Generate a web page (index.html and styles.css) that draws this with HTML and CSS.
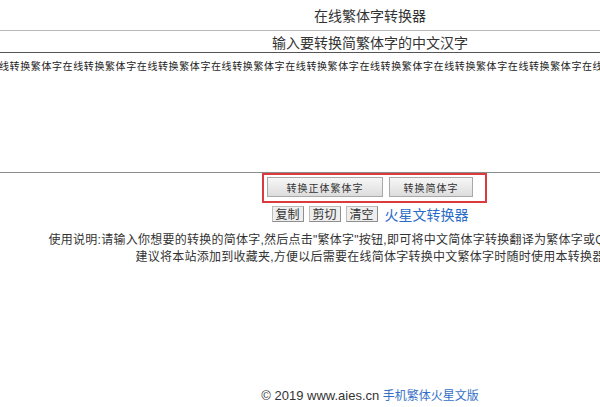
FILE: index.html
```html
<!DOCTYPE html>
<html lang="zh-CN">
<head>
<meta charset="utf-8">
<title>在线繁体字转换器</title>
<link rel="stylesheet" href="styles.css">
</head>
<body>
<div class="page">
  <h1 class="title">在线繁体字转换器</h1>
  <div class="subbar">输入要转换简繁体字的中文汉字</div>
  <textarea class="input" wrap="off" spellcheck="false">在线转换繁体字在线转换繁体字在线转换繁体字在线转换繁体字在线转换繁体字在线转换繁体字在线转换繁体字在线转换繁体字在线转换繁体字在线转换繁体字在线转换繁体字在线转换繁体字在线转换繁体字在线转换繁体字</textarea>
  <div class="actions">
    <div class="highlight">
      <button class="btn btn-wide">转换正体繁体字</button>
      <button class="btn btn-narrow">转换简体字</button>
    </div>
  </div>
  <div class="tools">
    <button class="btn-small">复制</button>
    <button class="btn-small">剪切</button>
    <button class="btn-small">清空</button>
    <a class="tool-link" href="#">火星文转换器</a>
  </div>
  <p class="note">使用说明:请输入你想要的转换的简体字,然后点击"繁体字"按钮,即可将中文简体字转换翻译为繁体字或QQ火星文,很方便<br>建议将本站添加到收藏夹,方便以后需要在线简体字转换中文繁体字时随时使用本转换器</p>
  <footer class="footer"><span class="footer-copy">© 2019 www.aies.cn</span> <a class="footer-link" href="#">手机繁体火星文版</a></footer>
</div>
</body>
</html>
```

FILE: styles.css
```css
html, body {
  margin: 0;
  padding: 0;
}

body {
  width: 600px;
  height: 407px;
  overflow: hidden;
  background: #fff;
  color: #333;
  font-family: "Liberation Sans", "Noto Sans CJK SC", sans-serif;
}

.page {
  width: 1066px;
  margin-left: -163px;
  height: 407px;
  display: flex;
  flex-direction: column;
}

.title {
  margin: 0;
  padding-top: 2px;
  height: 28px;
  line-height: 28px;
  font-size: 14px;
  font-weight: normal;
  text-align: center;
  color: #333;
  border-bottom: 1px solid #b8b8b8;
}

.subbar {
  padding-top: 4px;
  height: 17px;
  line-height: 17px;
  font-size: 14px;
  text-align: center;
  color: #333;
}

.input {
  display: block;
  box-sizing: border-box;
  width: 100%;
  height: 121px;
  margin: 0;
  padding: 6px 2px 2px 2px;
  border: 1px solid #777;
  border-top-color: #555;
  border-bottom-color: #8c8c8c;
  resize: none;
  overflow: hidden;
  outline: none;
  font-family: "Noto Sans CJK SC", sans-serif;
  font-size: 10px;
  letter-spacing: 0.6px;
  line-height: 14px;
  color: #222;
  background: #fff;
}

.actions {
  display: flex;
  justify-content: center;
}

.highlight {
  display: flex;
  gap: 6px;
  margin-left: 9px;
  padding: 2px 12px 4px 3px;
  border: 2px solid #db3b40;
}

.btn {
  height: 20px;
  margin: 0;
  padding: 0;
  border: 1px solid #a9a9a9;
  background: linear-gradient(#f7f7f7, #dcdcdc);
  font-family: "Noto Sans CJK SC", sans-serif;
  font-size: 10px;
  letter-spacing: 1px;
  color: #333;
}

.btn-wide {
  width: 116px;
}

.btn-narrow {
  width: 84px;
}

.tools {
  display: flex;
  justify-content: center;
  align-items: center;
  gap: 5px;
  margin-top: 3px;
  height: 16px;
}

.btn-small {
  height: 16px;
  width: 32px;
  margin: 0;
  padding: 0;
  border: 1px solid #8f8f8f;
  border-top-color: #bdbdbd;
  border-left-color: #bdbdbd;
  background: #eeeeee;
  font-family: "Noto Sans CJK SC", sans-serif;
  font-size: 12px;
  line-height: 14px;
  color: #333;
}

.tool-link {
  margin-left: 2px;
  font-family: "Noto Sans CJK SC", sans-serif;
  font-size: 14px;
  color: #2a6cc8;
  text-decoration: none;
}

.note {
  margin: 10px 0 0 0;
  font-size: 12px;
  letter-spacing: 0.25px;
  line-height: 17px;
  text-align: center;
  color: #333;
}

.footer {
  margin-top: auto;
  padding-bottom: 2px;
  line-height: 18px;
  font-size: 12px;
  text-align: center;
  color: #333;
}

.footer-copy {
  font-size: 13px;
}

.footer-link {
  font-family: "Noto Sans CJK SC", sans-serif;
  color: #3570c8;
  text-decoration: none;
}
```
